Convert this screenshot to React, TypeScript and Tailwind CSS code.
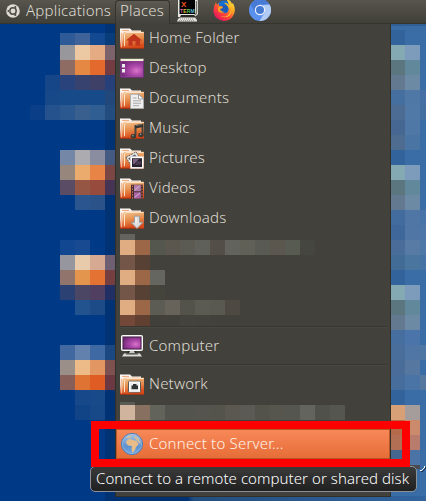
import type { ReactNode } from "react";

type Row = [number, number, string[]];

/* rows of pixelated cells: x, y, colours, each cell 15px square */
const leftRows: Row[] = [
  [60, 30, ["#2f5a98", "#3f6299", "#134990", "#083c7b"]],
  [60, 45, ["#97979c", "#ecc9a3", "#e5ab83", "#7c626b"]],
  [60, 60, ["#8f6c63", "#e58843", "#e4692d", "#733c42"]],
  [45, 75, ["#174688", "#29437c", "#37426f", "#3e4068", "#28407a"]],
  [45, 90, ["#174888", "#174a88", "#174a88", "#174a88", "#22477a"]],
  [30, 105, ["#0a3f88", "#25528c", "#2b588f", "#385f8e", "#305d92", "#234d7e"]],
  [60, 150, ["#7487a6", "#ababb0", "#8a8da0", "#455a80"]],
  [60, 165, ["#97867c", "#ebab6d", "#e88546", "#7b4745"]],
  [60, 180, ["#5b4c66", "#955744", "#964b3d", "#463454"]],
  [75, 195, ["#2b558e", "#2b5389"]],
  [60, 240, ["#114790", "#174a91"]],
  [60, 255, ["#96969e", "#e8cbab", "#d6aa92", "#6f5f73"]],
  [60, 270, ["#91756d", "#e4954d", "#e37233", "#753f41"]],
  [60, 285, ["#2b4073", "#4c4665", "#503f61", "#222f64"]],
  [75, 300, ["#23538e", "#1d4b88"]],
  [60, 345, ["#41699f", "#6282ad", "#3f69a3", "#1b4880"]],
  [60, 360, ["#9a9089", "#edbb88", "#e29762", "#7d514f"]],
  [60, 375, ["#875e58", "#df7333", "#df5d25", "#6c3841"]],
  [75, 390, ["#17498a", "#184989"]],
  [75, 405, ["#104487", "#174989"]],
];

const rightRows: Row[] = [
  [390, 30, ["#32639b", "#3a6da6"]],
  [390, 45, ["#85a9b2", "#7d9cbb"]],
  [390, 60, ["#5c7680", "#62889b"]],
  [390, 75, ["#63798f", "#6c8aa4"]],
  [390, 90, ["#456f9f", "#5078a7", "#466fa3"]],
  [390, 105, ["#4d6c94", "#5079a8", "#456f9f"]],
  [390, 120, ["#456792", "#5078a7"]],
  [390, 135, ["#4d6c90", "#4a74a3"]],
  [390, 150, ["#32639b"]],
  [390, 165, ["#85a9b2", "#7d9cbb"]],
  [390, 180, ["#5c7680", "#62889b"]],
  [390, 195, ["#63798f", "#6c8aa4"]],
  [390, 210, ["#426b9e", "#5076a6", "#4874a8"]],
  [390, 225, ["#3f6799", "#5076a5", "#4e77a8"]],
  [390, 240, ["#496c98", "#587ba5", "#5078a6"]],
  [390, 255, ["#426b96", "#4a759f", "#4673a3"]],
  [390, 270, ["#32639b"]],
  [390, 285, ["#85a9b2", "#7d9cbb"]],
  [390, 300, ["#5c7680", "#62889b"]],
  [390, 315, ["#63798f", "#6c8aa4"]],
  [390, 330, ["#466fa0", "#4a74aa"]],
  [390, 345, ["#4a6e9b", "#5076a6", "#4e77a4"]],
  [390, 360, ["#4a6c98", "#5678a0"]],
  [390, 375, ["#466d9c", "#4a74a5", "#56789f"]],
  [390, 390, ["#32639b"]],
  [390, 405, ["#d7a077", "#a59c9c"]],
  [390, 420, ["#b46b4a", "#cb8a6b"]],
  [390, 435, ["#b36f54", "#b97b6c"]],
  [390, 450, ["#45678f", "#4c73a5"]],
];

const Cells = ({ rows }: { rows: Row[] }) => (
  <>
    {rows.map(([x, y, colors]) =>
      colors.map((c, i) => (
        <rect key={`${x}-${y}-${i}`} x={x + i * 15} y={y} width={15} height={15} fill={c} />
      )),
    )}
  </>
);

const Wallpaper = () => (
  <svg className="absolute inset-0" width={426} height={501} shapeRendering="crispEdges">
    <defs>
      <linearGradient id="bottom" x1="0" x2="1" y1="0" y2="0">
        <stop offset="0" stopColor="#003172" />
        <stop offset="0.24" stopColor="#003172" />
        <stop offset="0.26" stopColor="#234e80" />
        <stop offset="1" stopColor="#32649e" />
      </linearGradient>
    </defs>
    <rect width={426} height={501} fill="#003a86" />
    <rect x={105} y={24} width={10} height={477} fill="#003274" />
    <rect x={391} y={24} width={35} height={477} fill="#3a6ca5" />
    <rect x={112} y={496} width={314} height={5} fill="url(#bottom)" />
    <Cells rows={leftRows} />
    <rect x={60} y={24} width={45} height={9} fill="#003a86" />
    <rect x={105} y={24} width={10} height={9} fill="#003274" />
    <Cells rows={rightRows} />
    <rect x={391} y={24} width={35} height={2} fill="#315f94" />
    <rect x={405} y={465} width={15} height={4} fill="#4a4a50" />
    <path d="M425 467v2l-2 2h-2" stroke="#16304f" strokeWidth="1" fill="none" />
    <path d="M424 466v2l-2 2h-2" stroke="#fff" strokeWidth="1" fill="none" />
  </svg>
);

const Folder = ({ children }: { children?: ReactNode }) => (
  <svg width={24} height={21} viewBox="0 0 24 22" preserveAspectRatio="none" className="mt-px shrink-0">
    <defs>
      <linearGradient id="folder" x1="0" y1="0" x2="0.25" y2="1">
        <stop offset="0" stopColor="#f3c695" />
        <stop offset="0.5" stopColor="#e79250" />
        <stop offset="1" stopColor="#d84b1b" />
      </linearGradient>
      <linearGradient id="back" x1="0" y1="0" x2="0" y2="1">
        <stop offset="0" stopColor="#fff" />
        <stop offset="0.55" stopColor="#f1d6c3" />
        <stop offset="1" stopColor="#d63d16" />
      </linearGradient>
    </defs>
    <path d="M0 21V0.500H10L12 2.500H21V6L3 21Z" fill="url(#back)" />
    <path d="M2 2.500H9M11 4.500H19" stroke="#eda06d" strokeWidth="1" />
    <path d="M1.500 20.500V5" stroke="#f2b795" strokeWidth="1" />
    <path d="M2.500 21V6L4.500 4H24V21Z" fill="url(#folder)" />
    <path d="M4.500 19V6.500L6 4.700H23.500" stroke="#fbe3cb" strokeWidth="1" fill="none" />
    <path d="M0 21.200H24" stroke="#b9330d" strokeWidth="1" />
    {children}
  </svg>
);

const HomeIcon = () => (
  <Folder>
    <path d="M14 6L22 13H20V18.500H15.500V14H12.500V18.500H8.500V13H6Z" fill="#bf341a" />
  </Folder>
);

const DocsIcon = () => (
  <Folder>
    <path d="M10.500 6.500H19L23.500 11V21.500H10.500Z" fill="#eee" stroke="#aaa" strokeWidth="1" />
    <path d="M18.500 6.500V11.500H23.500Z" fill="#fff" stroke="#888" strokeWidth="0.8" />
    <path d="M13 10.500H16.500M13 13.500H21M13 16H21M13 18.500H19" stroke="#a8a8a8" strokeWidth="1" />
  </Folder>
);

const MusicIcon = () => (
  <Folder>
    <path d="M15.500 18V8.500L22.500 7V17" fill="none" stroke="#444641" strokeWidth="2" />
    <path d="M15 9.500L23 8" stroke="#343632" strokeWidth="3" />
    <ellipse cx="13.500" cy="19" rx="2.700" ry="2.300" fill="#373934" />
    <ellipse cx="21" cy="17.700" rx="2.700" ry="2.300" fill="#373934" />
    <circle cx="13" cy="18.500" r="0.800" fill="#aaa" />
    <circle cx="20.500" cy="17" r="0.800" fill="#aaa" />
    <path d="M16 8L22 6.700" stroke="#858780" strokeWidth="0.700" />
  </Folder>
);

const PicturesIcon = () => (
  <Folder>
    <path d="M6 10L16 4L20 11L11 18Z" fill="#eee" stroke="#555" strokeWidth="1" strokeDasharray="2 1" />
    <path d="M8 11L15 6.500L18 11L12 15Z" fill="#68646b" />
    <rect x="10.500" y="9" width="13" height="12.500" fill="#fff" stroke="#ddd" strokeWidth="0.500" />
    <rect x="12" y="10.700" width="10" height="9.300" fill="#29212f" />
    <path d="M13 11.500H19L14 17H13Z" fill="#796180" />
    <path d="M17 14H21V17L15 18Z" fill="#4e3c55" />
  </Folder>
);

const VideosIcon = () => (
  <Folder>
    <rect x="11" y="7" width="12" height="15" fill="#492e32" />
    <rect x="14" y="7.500" width="6.800" height="6.400" fill="#b47fae" />
    <rect x="14" y="15" width="6.800" height="6.500" fill="#a966a4" />
    <path d="M12.500 8V22M22 8V22" stroke="#d7784c" strokeWidth="1" strokeDasharray="1.500 1.500" />
    <path d="M14.500 13L19.500 8M14.500 20.500L20 15.500" stroke="#d4b1d1" strokeWidth="1" />
  </Folder>
);

const DownloadsIcon = () => (
  <Folder>
    <path d="M14.500 8.500H19.500V15H23L17 21.500L11 15H14.500Z" fill="#ddd" stroke="#9b9b9b" strokeWidth="1" />
    <path d="M16 10V16" stroke="#fff" strokeWidth="1" />
  </Folder>
);

const NetworkIcon = () => (
  <Folder>
    <rect x="8.500" y="7.500" width="12" height="11.500" rx="1" fill="#f0f0ef" stroke="#555753" strokeWidth="1" />
    <rect x="9.500" y="8.500" width="10" height="9.500" fill="#eee" stroke="#fff" strokeWidth="1" />
    <path d="M11.500 16V12H13V10.500H16.500V12H18V16Z" fill="#2e3436" />
  </Folder>
);

const DesktopIcon = () => (
  <svg width={24} height={20} viewBox="0 0 24 20" className="shrink-0">
    <defs>
      <radialGradient id="purple" cx="0.7" cy="0.6" r="0.75">
        <stop offset="0" stopColor="#d975c9" />
        <stop offset="0.4" stopColor="#ad48aa" />
        <stop offset="1" stopColor="#722778" />
      </radialGradient>
    </defs>
    <rect width="24" height="20" rx="0.500" fill="#5b2161" />
    <rect x="1" y="3" width="22" height="16" fill="url(#purple)" stroke="#93529a" strokeWidth="0.700" />
    <path d="M0 0.500H24" stroke="#67685a" />
    <path d="M0.500 2H23.500" stroke="#f3efd8" strokeWidth="2" />
    <rect x="2" y="6" width="3" height="3.500" fill="#eee" />
    <rect x="2" y="11" width="3" height="3.500" fill="#eee" />
  </svg>
);

const ComputerIcon = () => (
  <svg width={24} height={22} viewBox="0 0 24 22" className="shrink-0">
    <rect x="1.500" y="0.500" width="21" height="15" rx="1" fill="#e6e6e2" stroke="#fafafa" />
    <rect x="3" y="2" width="18" height="12" fill="url(#purple)" stroke="#49204b" strokeWidth="1" />
    <path d="M8 16H16L17 19H7Z" fill="#252622" />
    <path d="M10 16H14L15 18H9Z" fill="#c9c9c3" />
    <path d="M4 18.500H20L22 21.500H2Z" fill="#dddcd8" />
    <path d="M6 19H18" stroke="#40413b" />
    <path d="M2 21.500H22" stroke="#888984" />
  </svg>
);

const GlobeIcon = () => (
  <svg width={24} height={24} viewBox="0 0 24 24" className="shrink-0">
    <defs>
      <linearGradient id="globe" x1="0" y1="0" x2="0" y2="1">
        <stop offset="0" stopColor="#a8c6e5" />
        <stop offset="0.6" stopColor="#5d91d0" />
        <stop offset="1" stopColor="#75a9df" />
      </linearGradient>
    </defs>
    <circle cx="12" cy="12" r="10.600" fill="url(#globe)" stroke="#4f7eb4" strokeWidth="1" />
    <circle cx="12" cy="12" r="9.500" fill="none" stroke="#9bc0e8" strokeWidth="0.600" />
    <path d="M6.500 9L9 7L12 7.500L14 8.500L16.500 8.500L18.500 12.500L16 15L15 18L12.500 21L11.500 17L12 14L8 13.500L6 11Z" fill="#e8bd87" />
    <path d="M6 6L9 3.500L12 3.500L11 5.500L8 6.500ZM15 4L18.500 6L20.500 11L19 11.500L16.500 8L14 6Z" fill="#cfbd9f" />
  </svg>
);

const UbuntuIcon = () => (
  <svg width={14} height={14} viewBox="0 0 14 14" className="shrink-0">
    <circle cx="7" cy="7" r="6.800" fill="#dfdbd2" />
    <circle cx="7" cy="7" r="3.200" fill="none" stroke="#4c4b44" strokeWidth="1.500" />
    <path d="M3.600 7H1M8.700 4L10 1.800M8.700 10L10 12.200" stroke="#dfdbd2" strokeWidth="1.200" />
    <circle cx="2.500" cy="7" r="1.100" fill="#4c4b44" />
    <circle cx="9.300" cy="3.100" r="1.100" fill="#4c4b44" />
    <circle cx="9.300" cy="10.900" r="1.100" fill="#4c4b44" />
  </svg>
);

const XtermIcon = () => (
  <svg width={22} height={23} viewBox="0 0 22 23" className="shrink-0">
    <path d="M1 0H20L21 2V15L18 18H1Z" fill="#e8e8e3" />
    <path d="M19.500 2V14L18 16" stroke="#77776f" strokeWidth="1.500" fill="none" />
    <rect x="2.500" y="0.500" width="15.500" height="14.500" fill="#000" />
    <path d="M4 16H17L19 18H3Z" fill="#282923" />
    <path d="M3 18.500H18L20 21V22.500H0L1 20Z" fill="#e2e2dd" />
    <path d="M3 20H17M2 21.700H18" stroke="#8a8a83" strokeDasharray="1 1" />
    <text x="4" y="7.500" fontFamily="Liberation Sans" fontSize="8" fontWeight="bold" fill="#ee5420">X</text>
    <text x="3" y="13.500" fontFamily="Liberation Sans" fontSize="6" fontWeight="bold" textLength="15" lengthAdjust="spacingAndGlyphs">
      <tspan fill="#e85ab5">T</tspan><tspan fill="#d6c438">E</tspan><tspan fill="#5ac859">R</tspan><tspan fill="#54bed5">M</tspan>
    </text>
  </svg>
);

const FirefoxIcon = () => (
  <svg width={22} height={22} viewBox="0 0 22 22" className="shrink-0">
    <defs>
      <linearGradient id="fox" x1="0.9" y1="0" x2="0.2" y2="0.9">
        <stop offset="0" stopColor="#fff04a" />
        <stop offset="0.35" stopColor="#ffad20" />
        <stop offset="0.65" stopColor="#ff4b35" />
        <stop offset="1" stopColor="#e8175c" />
      </linearGradient>
    </defs>
    <circle cx="11.500" cy="10" r="8.500" fill="#176fd1" />
    <path d="M3 3L4 6L6 4V7L9 7.500L8 10L6.500 11Q9 15 13 14Q17 12 15 8Q13 5 11 4Q13 3 16 6Q15 2 13 0Q18 1 19 5L20 4Q23 10 21 15Q18 22 11 22Q2 21 0.500 13Q0 8 3 3Z" fill="url(#fox)" />
    <path d="M16 5Q20 11 17 16Q13 20 7 17Q15 20 18 12Q19 8 16 5Z" fill="#ffd52d" />
    <circle cx="11" cy="10" r="4" fill="#1e5bb7" />
    <path d="M5 8L9 7L10 9L7 10Q8 13 12 13Q8 15 5 12Z" fill="#ff9e25" />
  </svg>
);

const ChromiumIcon = () => (
  <svg width={22} height={22} viewBox="0 0 22 22" className="shrink-0">
    <circle cx="11" cy="11" r="11" fill="#5b91ee" />
    <path d="M1.500 5.500A11 11 0 0 1 20.500 5.500H11L6 13Z" fill="#487bd6" />
    <path d="M20.500 5.500A11 11 0 0 1 10.500 22L16 13L14 6Z" fill="#b1cbf4" />
    <circle cx="11" cy="11" r="5.200" fill="#eef3fb" />
    <circle cx="11" cy="11" r="4" fill="#4479d4" />
  </svg>
);

const Item = ({ icon, label, className = "h-[30px]" }: { icon: ReactNode; label: string; className?: string }) => (
  <div className={`flex items-center gap-[5px] pl-1 ${className}`}>
    {icon}
    <span className="pb-[2px] whitespace-nowrap">{label}</span>
  </div>
);

const Separator = () => <div className="mx-[3px] h-[2px] shrink-0 border-t border-[#383731] bg-[#484740]" />;

const recent: Row[] = [
  [0, 6, ["#e0ac82", "#9c6746", "#53574d", "#5b574f", "#5b5b54", "#60605a", "#534f48", "#63635d", "#606057", "#595a53", "#5b574f", "#575b52", "#464640"]],
  [0, 21, ["#735647", "#574135"]],
  [0, 36, ["#e0ac82", "#9c6746", "#666660", "#42413b"]],
  [0, 51, ["#735647", "#574135", "#44443d"]],
  [0, 66, ["#e0ac82", "#9c6746", "#5c5c55", "#67635b", "#53534c", "#5b5a53", "#595851", "#4e4943"]],
  [0, 81, ["#744839", "#613f31", "#41403a", "#41403a", "#44433d", "#43423c"]],
];

const mounted: Row[] = [
  [0, 3, ["#d1b49d", "#887061", "#62645b", "#54544e", "#54544e", "#56544e", "#54544d", "#5b5851", "#5b5a54", "#53534c", "#56564f", "#565650", "#64645e", "#51514b", "#565650"]],
];

export default function App() {
  return (
    <div className="relative flex h-[501px] w-[426px] flex-col overflow-hidden font-['Noto_Sans','Open_Sans',sans-serif] text-[15px] leading-[22px] font-light tracking-[0.2px] text-[#dfdbd2]">
      <Wallpaper />
      <header className="relative flex h-6 shrink-0 items-start border-b border-[#35342f] bg-linear-to-b from-[#57554c] to-[#403f39]">
        <div className="flex w-[115px] shrink-0 items-center gap-[6px] pl-1.5 leading-[21px]">
          <UbuntuIcon />
          <span>Applications</span>
        </div>
        <div className="h-6 w-[55px] shrink-0 rounded-t border border-b-0 border-[#34332e] bg-linear-to-b from-[#5c5a52] to-[#42413b] pl-1 leading-[19px]">
          Places
        </div>
        <div className="-mt-px flex pl-[7px]">
          <XtermIcon />
          <div className="ml-[14px]"><FirefoxIcon /></div>
          <div className="ml-[14px]"><ChromiumIcon /></div>
        </div>
      </header>

      <nav className="relative ml-[115px] flex h-[473px] w-[276px] shrink-0 flex-col border border-t-0 border-[#302f2a] bg-[#42413b]">
        <div className="-mt-px mb-px flex h-[210px] shrink-0 flex-col">
          <Item icon={<HomeIcon />} label="Home Folder" />
          <Item icon={<DesktopIcon />} label="Desktop" />
          <Item icon={<DocsIcon />} label="Documents" />
          <Item icon={<MusicIcon />} label="Music" />
          <Item icon={<PicturesIcon />} label="Pictures" />
          <Item icon={<VideosIcon />} label="Videos" />
          <Item icon={<DownloadsIcon />} label="Downloads" />
        </div>
        <svg width={200} height={92} className="ml-1 shrink-0" shapeRendering="crispEdges">
          <rect width={15} height={6} fill="#64635e" />
          <Cells rows={recent} />
        </svg>
        <Separator />
        <Item icon={<ComputerIcon />} label="Computer" className="h-9 shrink-0" />
        <Separator />
        <Item icon={<NetworkIcon />} label="Network" className="h-9 shrink-0" />
        <svg width={230} height={18} className="ml-1 shrink-0" shapeRendering="crispEdges">
          <rect width={15} height={3} fill="#5b5b55" />
          <Cells rows={mounted} />
        </svg>
        <div className="mt-[9px] h-[30px] shrink-0 border border-[#b75827] bg-linear-to-b from-[#f88858] to-[#e66d37] text-[#fff2e8]">
          <Item icon={<GlobeIcon />} label="Connect to Server..." className="-ml-px h-[27px]" />
        </div>
      </nav>

      <div className="absolute left-[90px] top-[466px] flex h-[26px] w-[327px] items-center whitespace-nowrap rounded-[5px] border border-[#8c9198] bg-linear-to-b from-[#3b3b3b] to-[#202020] pb-[3px] pl-[5px] tracking-[0.06px] text-white">
        Connect to a remote computer or shared disk
      </div>
      <div className="absolute left-[91px] top-[421px] h-[46px] w-[319px] border-8 border-[#fe0000]" />
    </div>
  );
}
